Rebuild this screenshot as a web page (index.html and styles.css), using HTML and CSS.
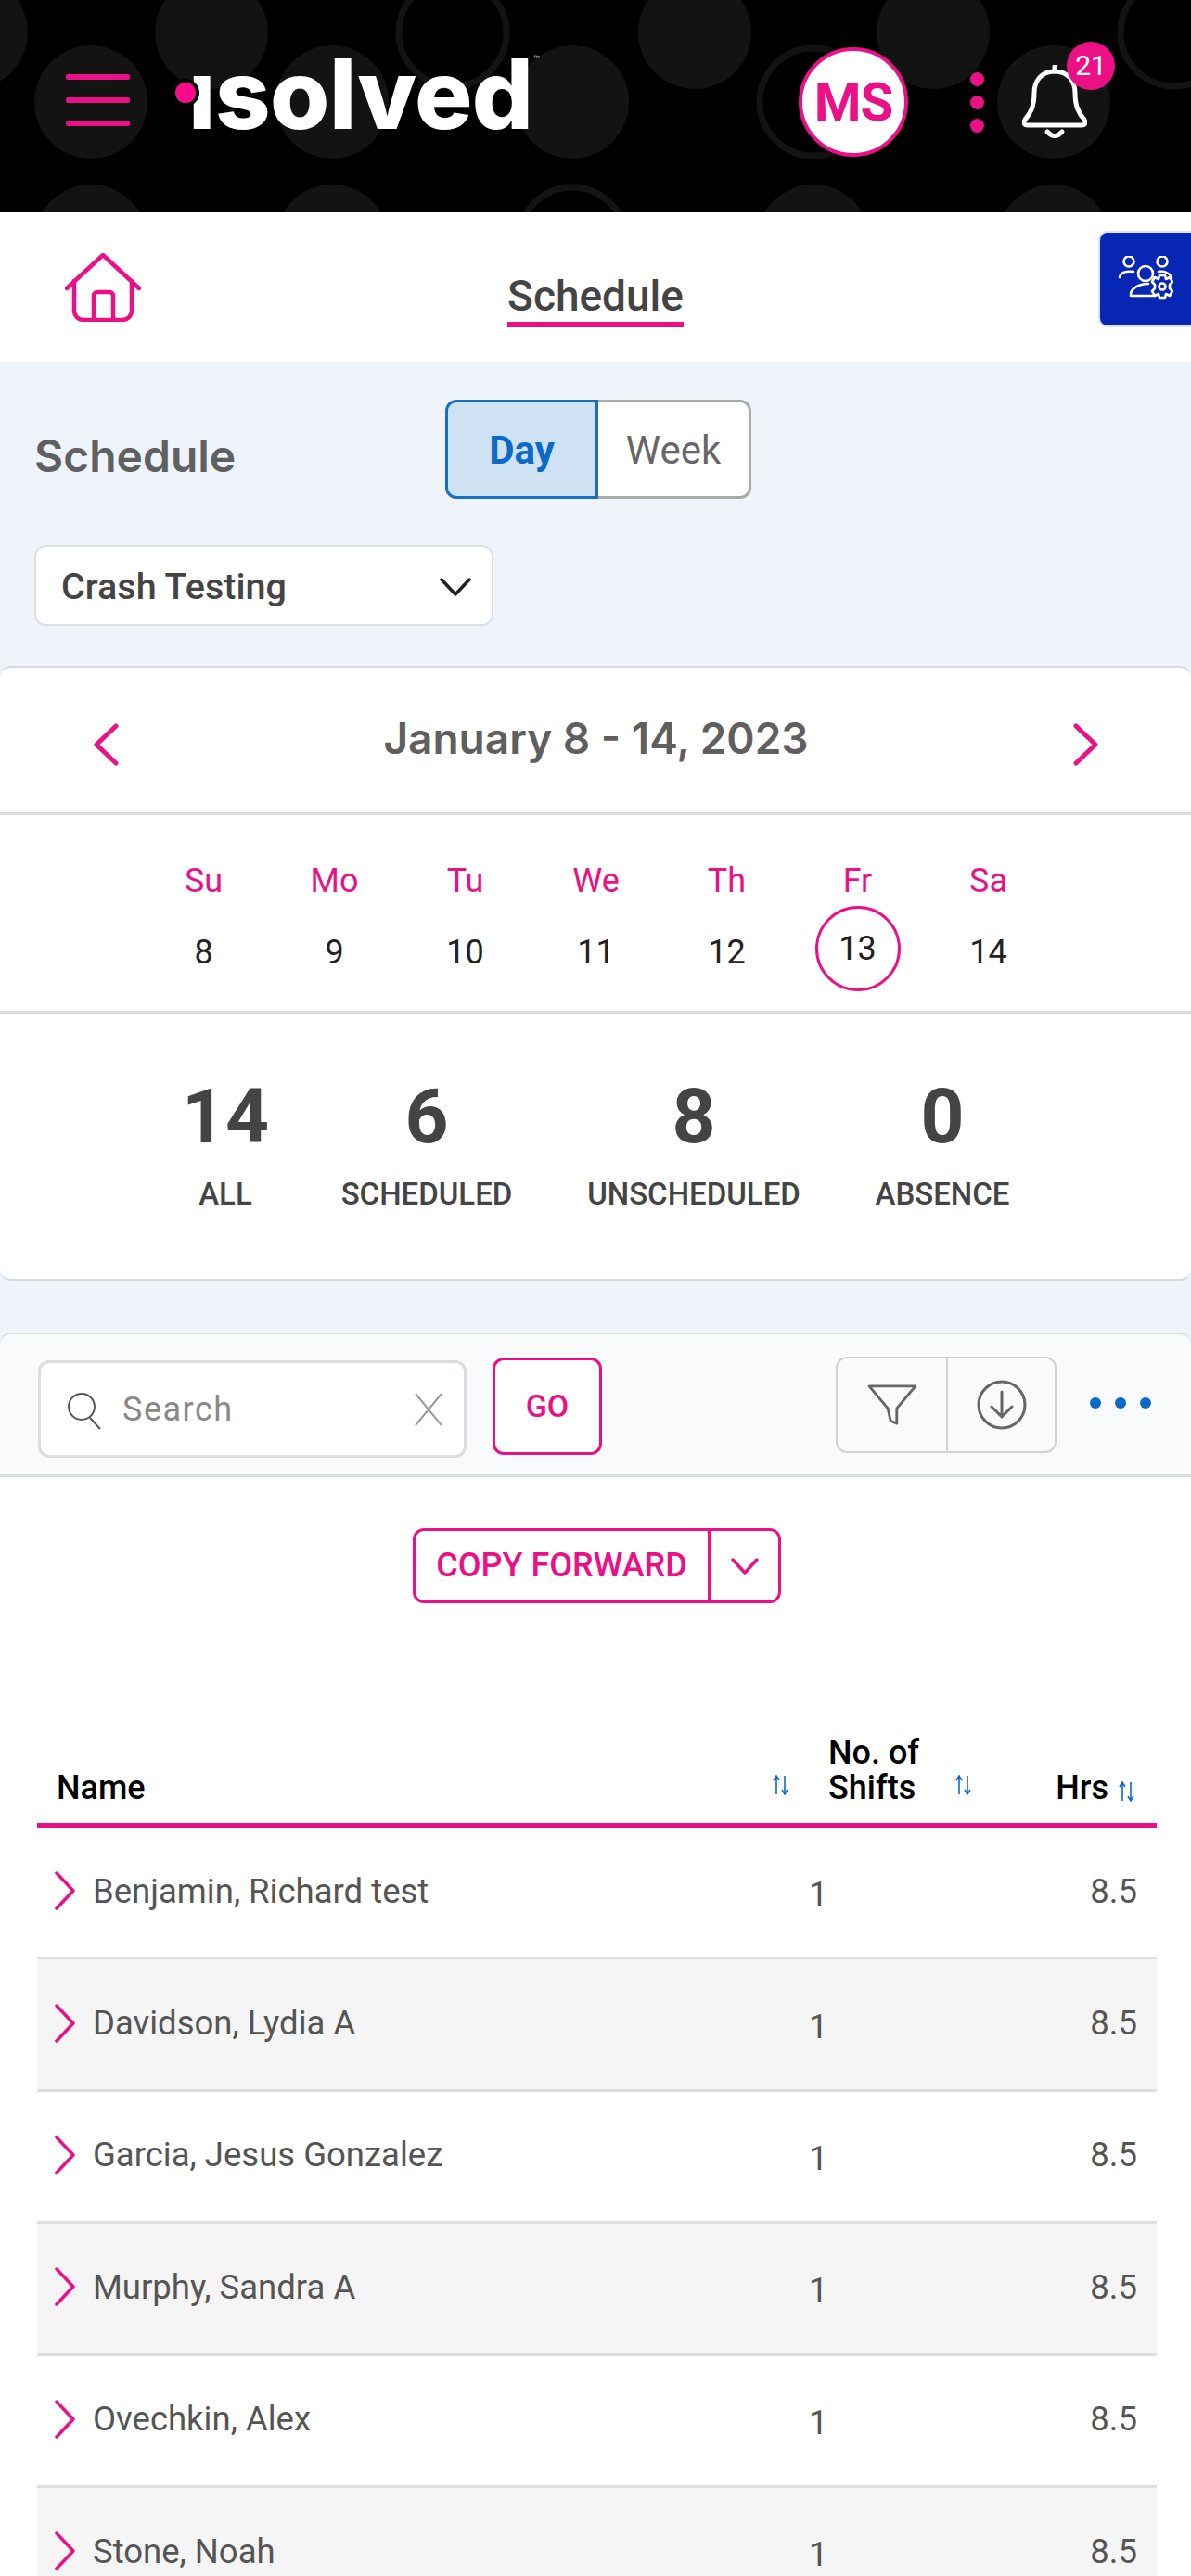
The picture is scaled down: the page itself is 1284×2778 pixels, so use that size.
FILE: index.html
```html
<!DOCTYPE html>
<html lang="en">
<head>
  <meta charset="UTF-8">
  <title>isolved - Schedule</title>
  <link rel="stylesheet" href="styles.css">
</head>
<body>

  <header class="topbar">
    <svg class="topbarPattern" width="1284" height="229" viewBox="0 0 1284 229">
      <g fill="#131313">
        <circle cx="-31" cy="35" r="61"/><circle cx="228" cy="35" r="61"/><circle cx="749" cy="35" r="61"/><circle cx="1006" cy="35" r="61"/>
        <circle cx="98" cy="110" r="61"/><circle cx="358" cy="110" r="61"/><circle cx="617" cy="110" r="61"/><circle cx="1136" cy="110" r="61"/>
        <circle cx="98" cy="260" r="61"/><circle cx="358" cy="260" r="61"/><circle cx="877" cy="260" r="61"/><circle cx="1136" cy="260" r="61"/>
      </g>
      <g fill="none" stroke="#131313" stroke-width="7">
        <circle cx="488" cy="35" r="58"/><circle cx="1266" cy="35" r="58"/><circle cx="877" cy="110" r="58"/><circle cx="617" cy="260" r="58"/>
      </g>
    </svg>
    <div class="burger"><span></span><span></span><span></span></div>
    <div class="logo">
      <span class="logoDot"></span>
      <span class="logoText">ısolved</span>
      <span class="logoTm">™</span>
    </div>
    <div class="avatar">MS</div>
    <div class="kebab"><span></span><span></span><span></span></div>
    <div class="bell">
      <svg width="70" height="80" viewBox="0 0 70 80" fill="none" stroke="#fff" stroke-width="5" stroke-linecap="round" stroke-linejoin="round">
        <path d="M35 7C20 7 13 18 13 30C13 45 9 52 3 59Q0 65 6 65H64Q70 65 67 59C61 52 57 45 57 30C57 18 50 7 35 7Z"/>
        <path d="M35 2V7"/>
        <path d="M27 72Q35 81 43 72"/>
      </svg>
      <span class="bellBadge">21</span>
    </div>
  </header>

  <nav class="subnav">
    <svg class="homeIcon" width="82" height="74" viewBox="0 0 82 74" fill="none" stroke="#ec1087" stroke-width="4.5" stroke-linecap="round" stroke-linejoin="round">
      <path d="M2 38L41 2L80 38"/>
      <path d="M10 30V62A10 10 0 0 0 20 72H62A10 10 0 0 0 72 62V30"/>
      <path d="M31 71V46A4 4 0 0 1 35 42H48A4 4 0 0 1 52 46V71"/>
    </svg>
    <div class="subnavTitle">Schedule</div>
    <div class="adminBtn">
      <svg width="60" height="50" viewBox="0 0 60 50" fill="none" stroke="#fff" stroke-width="2.6" stroke-linecap="round" stroke-linejoin="round">
        <circle cx="12" cy="6" r="5.5"/>
        <circle cx="48" cy="6" r="5.5"/>
        <circle cx="30" cy="19" r="8"/>
        <path d="M2 23C3 18 9 16 17 17"/>
        <path d="M58 23C56 19 51 16 44 17"/>
        <path d="M40 43H14C13 36 22 30 33 30"/>
        <path fill="#0826b4" d="M45 21L51 21L52 25L56 23L59 28L56 31V35L59 38L56 43L52 41L51 45H45L44 41L40 43L37 38L40 35V31L37 28L40 23L44 25Z"/>
        <circle cx="48" cy="33" r="3.5"/>
      </svg>
    </div>
  </nav>

  <section class="schedulePanel">
    <div class="panelHead">
      <h2 class="panelTitle">Schedule</h2>
      <div class="viewToggle">
        <div class="viewOpt active">Day</div>
        <div class="viewOpt">Week</div>
      </div>
    </div>

    <div class="deptSelect">
      <span>Crash Testing</span>
      <svg width="34" height="22" viewBox="0 0 34 22" fill="none" stroke="#222" stroke-width="3.5" stroke-linecap="round" stroke-linejoin="round"><path d="M2 3L17 19L32 3"/></svg>
    </div>

    <div class="weekCard">
      <div class="weekNav">
        <svg class="weekArrow" width="28" height="46" viewBox="0 0 28 46" fill="none" stroke="#ec1087" stroke-width="5" stroke-linecap="round" stroke-linejoin="round"><path d="M25 3L4 23L25 43"/></svg>
        <div class="weekLabel">January 8 - 14, 2023</div>
        <svg class="weekArrow" width="28" height="46" viewBox="0 0 28 46" fill="none" stroke="#ec1087" stroke-width="5" stroke-linecap="round" stroke-linejoin="round"><path d="M3 3L24 23L3 43"/></svg>
      </div>

      <div class="weekDays">
        <div class="day"><div class="dayName">Su</div><div class="dayNum">8</div></div>
        <div class="day"><div class="dayName">Mo</div><div class="dayNum">9</div></div>
        <div class="day"><div class="dayName">Tu</div><div class="dayNum">10</div></div>
        <div class="day"><div class="dayName">We</div><div class="dayNum">11</div></div>
        <div class="day"><div class="dayName">Th</div><div class="dayNum">12</div></div>
        <div class="day"><div class="dayName">Fr</div><div class="dayNum today">13</div></div>
        <div class="day"><div class="dayName">Sa</div><div class="dayNum">14</div></div>
      </div>

      <div class="stats">
        <div class="stat"><div class="statNum">14</div><div class="statLabel">ALL</div></div>
        <div class="stat"><div class="statNum">6</div><div class="statLabel">SCHEDULED</div></div>
        <div class="stat"><div class="statNum">8</div><div class="statLabel">UNSCHEDULED</div></div>
        <div class="stat"><div class="statNum">0</div><div class="statLabel">ABSENCE</div></div>
      </div>
    </div>

    <div class="toolbar">
      <div class="searchBox">
        <svg width="40" height="40" viewBox="0 0 40 40" fill="none" stroke="#555" stroke-width="2"><circle cx="16" cy="15" r="14"/><path d="M25 27L36 39"/></svg>
        <span class="searchText">Search</span>
        <svg class="searchClear" width="32" height="38" viewBox="0 0 32 38" fill="none" stroke="#999" stroke-width="2"><path d="M2 2L30 36M30 2L2 36"/></svg>
      </div>
      <div class="goBtn">GO</div>
      <div class="toolGroup">
        <div class="toolBtn">
          <svg width="54" height="46" viewBox="0 0 56 48" fill="none" stroke="#666" stroke-width="3" stroke-linejoin="round"><path d="M2 3H54L33 28V45L26 42L23 28Z"/></svg>
        </div>
        <div class="toolBtn">
          <svg width="54" height="54" viewBox="0 0 54 54" fill="none" stroke="#666" stroke-width="3" stroke-linecap="round" stroke-linejoin="round"><circle cx="27" cy="27" r="25"/><path d="M27 13V40M16 29L27 40L38 29"/></svg>
        </div>
      </div>
      <div class="moreDots"><span></span><span></span><span></span></div>
    </div>
  </section>

  <main class="listArea">
    <div class="copyForward">
      <div class="copyLabel">COPY FORWARD</div>
      <div class="copyArrow">
        <svg width="32" height="20" viewBox="0 0 32 20" fill="none" stroke="#ec1087" stroke-width="3.5" stroke-linecap="round" stroke-linejoin="round"><path d="M3 3L16 17L29 3"/></svg>
      </div>
    </div>

    <div class="tableHead">
      <div class="colName">
        <span>Name</span>
        <svg class="sortIcon sortHigh" width="22" height="22" viewBox="0 0 22 22"><use href="#sortArrows"/></svg>
      </div>
      <div class="colShifts">
        <span>No. of<br>Shifts</span>
        <svg class="sortIcon sortHigh" width="22" height="22" viewBox="0 0 22 22"><use href="#sortArrows"/></svg>
      </div>
      <div class="colHrs">
        <span>Hrs</span>
        <svg class="sortIcon" width="22" height="22" viewBox="0 0 22 22"><use href="#sortArrows"/></svg>
      </div>
    </div>

    <div class="row">
      <div class="rowName"><svg width="22" height="42" viewBox="0 0 22 42"><use href="#rowChevron"/></svg>Benjamin, Richard test</div>
      <div class="rowCount">1</div>
      <div class="rowHrs">8.5</div>
    </div>
    <div class="row">
      <div class="rowName"><svg width="22" height="42" viewBox="0 0 22 42"><use href="#rowChevron"/></svg>Davidson, Lydia A</div>
      <div class="rowCount">1</div>
      <div class="rowHrs">8.5</div>
    </div>
    <div class="row">
      <div class="rowName"><svg width="22" height="42" viewBox="0 0 22 42"><use href="#rowChevron"/></svg>Garcia, Jesus Gonzalez</div>
      <div class="rowCount">1</div>
      <div class="rowHrs">8.5</div>
    </div>
    <div class="row">
      <div class="rowName"><svg width="22" height="42" viewBox="0 0 22 42"><use href="#rowChevron"/></svg>Murphy, Sandra A</div>
      <div class="rowCount">1</div>
      <div class="rowHrs">8.5</div>
    </div>
    <div class="row">
      <div class="rowName"><svg width="22" height="42" viewBox="0 0 22 42"><use href="#rowChevron"/></svg>Ovechkin, Alex</div>
      <div class="rowCount">1</div>
      <div class="rowHrs">8.5</div>
    </div>
    <div class="row">
      <div class="rowName"><svg width="22" height="42" viewBox="0 0 22 42"><use href="#rowChevron"/></svg>Stone, Noah</div>
      <div class="rowCount">1</div>
      <div class="rowHrs">8.5</div>
    </div>
  </main>

  <svg class="iconDefs" width="0" height="0">
    <defs>
      <g id="sortArrows" fill="none" stroke="#0b6bc4" stroke-width="1.6">
        <path d="M6 21V2M3 6L6 1L9 6"/>
        <path d="M15 1V20M12 16L15 21L18 16"/>
      </g>
      <path id="rowChevron" fill="none" stroke="#ec1087" stroke-width="3.5" stroke-linecap="round" stroke-linejoin="round" d="M2 2L20 21L2 40"/>
    </defs>
  </svg>

</body>
</html>
```

FILE: styles.css
```css
* { box-sizing: border-box; }
body {
  margin: 0;
  width: 1284px;
  height: 2778px;
  overflow: hidden;
  background: #fff;
  font-family: Roboto, sans-serif;
  color: #444;
}

/* top black bar */
.topbar {
  position: relative;
  display: flex;
  align-items: center;
  height: 229px;
  padding: 0 0 9px 71px;
  background: #000;
  overflow: hidden;
}
.topbarPattern {
  position: absolute;
  top: 0;
  left: 0;
}
.burger {
  position: relative;
  display: flex;
  flex-direction: column;
  gap: 19px;
  width: 69px;
  margin-top: -4px;
}
.burger span {
  height: 6px;
  border-radius: 2px;
  background: #ec1087;
}
.logo {
  position: relative;
  display: flex;
  align-items: flex-start;
  width: 402px;
  height: 90px;
  margin-left: 49px;
  margin-top: -19px;
}
.logoDot {
  position: absolute;
  top: 33px;
  left: 0;
  width: 22px;
  height: 22px;
  border-radius: 50%;
  background: #ff0a8c;
  box-shadow: 0 0 0 4px #000;
  z-index: 1;
}
.logoText {
  margin-left: 14px;
  font-family: Inter, sans-serif;
  font-weight: 800;
  font-size: 104px;
  line-height: 90px;
  letter-spacing: -0.5px;
  color: #fff;
}
.logoTm {
  font-size: 12px;
  color: #ccc;
  line-height: 16px;
}
.avatar {
  position: relative;
  display: flex;
  align-items: center;
  justify-content: center;
  width: 118px;
  height: 118px;
  margin-left: 270px;
  border: 4px solid #ec1087;
  border-radius: 50%;
  background: #fff;
  color: #ec1087;
  font-weight: 700;
  font-size: 58px;
  letter-spacing: -1px;
}
.kebab {
  position: relative;
  display: flex;
  flex-direction: column;
  gap: 10px;
  margin-left: 67px;
}
.kebab span {
  width: 15px;
  height: 15px;
  border-radius: 50%;
  background: #ec1087;
}
.bell {
  position: relative;
  width: 70px;
  height: 80px;
  margin-left: 41px;
}
.bellBadge {
  position: absolute;
  top: -25px;
  left: 48px;
  width: 52px;
  height: 52px;
  border-radius: 50%;
  background: #ec1087;
  color: #fff;
  font-size: 30px;
  line-height: 52px;
  text-align: center;
}

/* white nav row */
.subnav {
  display: grid;
  grid-template-columns: 1fr auto 1fr;
  align-items: center;
  height: 161px;
  padding-left: 70px;
}
.homeIcon {
  margin-top: 1px;
}
.subnavTitle {
  margin-top: 26px;
  margin-left: -70px;
  padding-bottom: 1px;
  border-bottom: 6px solid #ec1087;
  font-weight: 500;
  font-size: 46px;
  line-height: 54px;
  color: #444;
}
.adminBtn {
  display: flex;
  align-items: center;
  justify-content: center;
  justify-self: end;
  width: 98px;
  height: 100px;
  margin-top: -18px;
  border-radius: 8px 0 0 8px;
  background: #0826b4;
  box-shadow: 0 0 0 2px #dfe2e8;
}

/* pale blue panel */
.schedulePanel {
  padding-top: 41px;
  background: #eff4fa;
}
.panelHead {
  display: flex;
  padding-left: 37px;
}
.panelTitle {
  width: 443px;
  margin: 25px 0 0;
  font-family: Inter, sans-serif;
  font-weight: 600;
  font-size: 48px;
  line-height: 72px;
  color: #5f6062;
}
.viewToggle {
  display: flex;
  height: 107px;
}
.viewOpt {
  width: 165px;
  border: 3px solid #aaa;
  border-left: none;
  border-radius: 0 12px 12px 0;
  background: #fff;
  font-size: 42px;
  line-height: 103px;
  text-align: center;
  color: #666;
}
.viewOpt.active {
  border: 3px solid #1b6fc0;
  border-radius: 12px 0 0 12px;
  background: #cfe2f4;
  color: #0b6bc4;
  font-weight: 700;
}
.deptSelect {
  display: flex;
  align-items: center;
  justify-content: space-between;
  width: 495px;
  height: 87px;
  margin: 50px 0 0 37px;
  padding: 2px 22px 0 27px;
  border: 2px solid #dcdfe3;
  border-radius: 12px;
  background: #fff;
  font-weight: 500;
  font-size: 39.5px;
  color: #444;
}
.weekCard {
  margin-top: 43px;
  border: 2px solid #d6d9dd;
  border-width: 2px 0;
  border-radius: 12px;
  background: #fff;
}
.weekNav {
  display: flex;
  align-items: center;
  justify-content: space-between;
  height: 159px;
  padding: 0 99px 0 100px;
  border-bottom: 3px solid #dadcdf;
}
.weekArrow {
  margin-top: 10px;
}
.weekLabel {
  margin-top: -4px;
  font-family: Inter, sans-serif;
  font-weight: 600;
  font-size: 46px;
  color: #5f5f5f;
}
.weekDays {
  display: grid;
  grid-template-columns: repeat(7, 141px);
  height: 214px;
  padding: 46px 0 0 149px;
  border-bottom: 3px solid #dadcdf;
  text-align: center;
}
.dayName {
  font-size: 36px;
  line-height: 50px;
  color: #ec1087;
}
.dayNum {
  width: 92px;
  height: 92px;
  margin: 2px auto 0;
  font-size: 36px;
  line-height: 100px;
  color: #222;
}
.dayNum.today {
  border: 3px solid #ec1087;
  border-radius: 50%;
  line-height: 86px;
}
.stats {
  display: grid;
  grid-template-columns: 130px 304px 272px 264px;
  height: 286px;
  padding: 63px 0 0 178px;
  text-align: center;
}
.statNum {
  font-weight: 700;
  font-size: 82px;
  line-height: 96px;
  color: #444;
}
.statLabel {
  margin-top: 16px;
  font-weight: 500;
  font-size: 33px;
  line-height: 40px;
  color: #444;
}

/* search row */
.toolbar {
  display: flex;
  align-items: center;
  height: 156px;
  margin-top: 56px;
  padding-left: 41px;
  border: 2px solid #dadcdf;
  border-width: 2px 0 3px;
  border-radius: 12px 12px 0 0;
  background: #f8fafc;
}
.searchBox {
  display: flex;
  align-items: center;
  width: 462px;
  height: 105px;
  margin-top: 9px;
  padding: 6px 22px 0 28px;
  border: 3px solid #dadcdf;
  border-radius: 12px;
  background: #fff;
}
.searchText {
  flex: 1;
  margin: -5px 0 0 20px;
  font-size: 36px;
  letter-spacing: 1.5px;
  color: #888;
}
.searchClear {
  margin-top: -4px;
}
.goBtn {
  width: 118px;
  height: 105px;
  margin-left: 28px;
  margin-top: 3px;
  border: 3px solid #ec1087;
  border-radius: 12px;
  background: #fff;
  color: #ec1087;
  font-weight: 500;
  font-size: 34px;
  line-height: 99px;
  text-align: center;
}
.toolGroup {
  display: flex;
  height: 104px;
  margin-left: 252px;
  border: 2px solid #cfd2d6;
  border-radius: 12px;
}
.toolBtn {
  display: flex;
  align-items: center;
  justify-content: center;
  width: 117px;
}
.toolBtn + .toolBtn {
  border-left: 2px solid #cfd2d6;
}
.moreDots {
  display: flex;
  gap: 15px;
  margin: -4px 0 0 36px;
}
.moreDots span {
  width: 12px;
  height: 12px;
  border-radius: 50%;
  background: #0b6bc4;
}

/* list */
.listArea {
  padding: 55px 37px 0 40px;
}
.copyForward {
  display: flex;
  width: 397px;
  height: 81px;
  margin-left: 405px;
  border: 3px solid #ec1087;
  border-radius: 12px;
  color: #ec1087;
}
.copyLabel {
  width: 318px;
  border-right: 3px solid #ec1087;
  font-weight: 500;
  font-size: 36px;
  line-height: 75px;
  text-align: center;
}
.copyArrow {
  display: flex;
  align-items: center;
  justify-content: center;
  flex: 1;
}
.tableHead,
.row {
  display: grid;
  grid-template-columns: 813px 207px 187px;
}
.tableHead {
  align-items: end;
  height: 242px;
  padding-bottom: 19px;
  border-bottom: 5px solid #ec1087;
  font-weight: 500;
  font-size: 36px;
  line-height: 38px;
  color: #000;
}
.colName,
.colShifts,
.colHrs {
  display: flex;
  align-items: flex-end;
  justify-content: space-between;
}
.colName {
  padding-left: 21px;
}
.colShifts {
  padding: 0 10px 0 40px;
}
.colHrs {
  justify-content: flex-end;
  gap: 9px;
  padding-right: 21px;
}
.sortIcon {
  margin-bottom: 4px;
}
.sortHigh {
  margin-bottom: 11px;
}
.row {
  align-items: center;
  height: 142.4px;
  border-bottom: 3px solid #dedede;
  font-size: 36.5px;
  color: #555;
}
.row:nth-of-type(even) {
  background: #f5f5f5;
}
.rowName {
  display: flex;
  align-items: center;
  gap: 19px;
  padding: 0 0 3px 19px;
}
.rowName svg {
  flex: none;
}
.rowCount {
  padding: 4px 0 0 19px;
}
.rowHrs {
  padding: 0 21px 3px 0;
  text-align: right;
}
.iconDefs {
  position: absolute;
}
```
